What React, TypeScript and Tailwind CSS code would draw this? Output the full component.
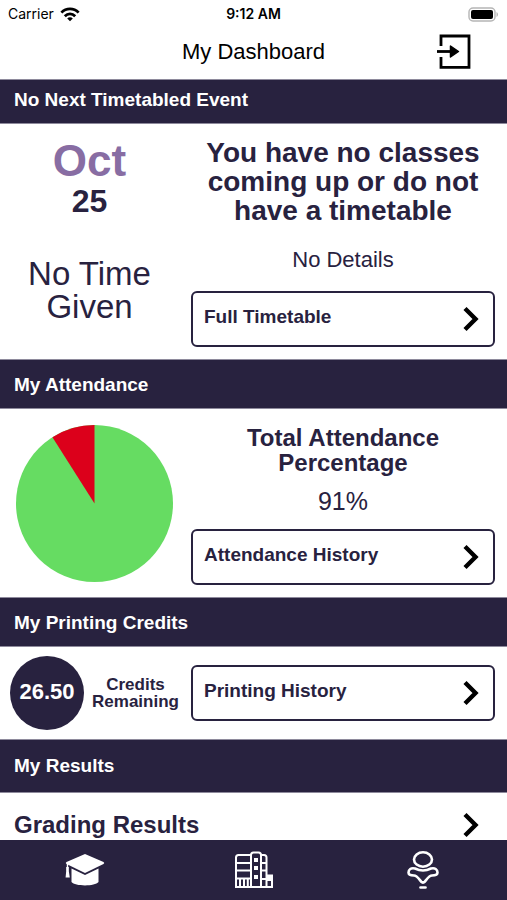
import type { ReactNode } from 'react'

interface SectionProps {
  title: string
  barClass: string
  children: ReactNode
}

function Section({ title, barClass, children }: SectionProps) {
  return (
    <section>
      <h2
        className={`flex items-center border-y border-[#8e8a9c] bg-[#28223f] px-3.5 text-[19px] leading-6 font-bold text-white ${barClass}`}
      >
        {title}
      </h2>
      {children}
    </section>
  )
}

function Chevron() {
  return (
    <svg viewBox="0 0 16 26" className="h-[26px] w-4 shrink-0" fill="none" stroke="#000" strokeWidth="4.4" aria-hidden="true">
      <path d="M2 2.5 L12.5 13 L2 23.5" />
    </svg>
  )
}

function LinkButton({ label }: { label: string }) {
  return (
    <button
      type="button"
      className="flex h-14 w-full items-center justify-between rounded-md border-2 border-[#28223f] bg-white pr-3.5 pl-[11px] text-left text-[19px] leading-6 font-bold"
    >
      <span className="pb-1">{label}</span>
      <Chevron />
    </button>
  )
}

function StatusBar() {
  return (
    <div className="grid h-7 grid-cols-3 items-center px-2 font-[Inter,sans-serif] text-sm text-black">
      <div className="flex items-center gap-1.5">
        <span>Carrier</span>
        <svg viewBox="0 0 20 15" className="h-[15px] w-5" fill="none" stroke="#000" strokeWidth="2.8" aria-hidden="true">
          <path d="M1.4 5.6 C6.2 .6 13.8 .6 18.6 5.6" />
          <path d="M4.8 9.2 C7.8 6.2 12.2 6.2 15.2 9.2" />
          <path d="M10 14.2 L7.2 11.4 C8.8 9.9 11.2 9.9 12.8 11.4 Z" fill="#000" stroke="none" />
        </svg>
      </div>
      <span className="text-center font-semibold">9:12 AM</span>
      <svg viewBox="0 0 31 15" className="h-[15px] w-[31px] justify-self-end" aria-hidden="true">
        <rect x="1" y="1" width="26" height="13" rx="4" fill="#fff" stroke="#b5b5b5" strokeWidth="1.4" />
        <rect x="3" y="3" width="22" height="9" rx="2" fill="#000" />
        <path d="M28.5 5 C30.5 6 30.5 9 28.5 10 Z" fill="#b5b5b5" />
      </svg>
    </div>
  )
}

function TitleBar() {
  return (
    <header className="grid h-[51px] grid-cols-[1fr_auto_1fr] items-center pr-9 pb-[3px]">
      <h1 className="col-start-2 pl-9 text-[22px] leading-7 text-black">My Dashboard</h1>
      <button type="button" aria-label="Log out" className="justify-self-end">
        <svg viewBox="0 0 34 36" className="h-9 w-[34px]" fill="none" stroke="#000" strokeWidth="2.8" aria-hidden="true">
          <path d="M4 12 V2 H32 V33.4 H4 V23" />
          <path d="M0 17.5 H16" />
          <path d="M13.5 12 L21.5 17.5 L13.5 23 Z" fill="#000" strokeWidth="1.5" strokeLinejoin="round" />
        </svg>
      </button>
    </header>
  )
}

// Red slice is the missed share, drawn back from twelve o'clock
function AttendancePie({ percent }: { percent: number }) {
  const angle = ((100 - percent) / 100) * 2 * Math.PI
  const x = 50 - 50 * Math.sin(angle)
  const y = 50 - 50 * Math.cos(angle)

  return (
    <svg viewBox="0 0 100 100" className="size-[157px]" role="img" aria-label={`${percent}% attended`}>
      <circle cx="50" cy="50" r="50" fill="#66dc62" />
      <path d={`M50 50 L50 0 A50 50 0 0 0 ${x} ${y} Z`} fill="#dc001b" />
    </svg>
  )
}

function GraduationIcon() {
  return (
    <svg viewBox="0 0 40 34" className="h-[34px] w-10" fill="#fff" aria-hidden="true">
      <path d="M20 1 L38.5 9 Q40 10 38.5 11 L20 20 L1.5 11 Q0 10 1.5 9 Z" />
      <path d="M6.5 15.5 L20 22 L33.5 15.5 V29 C30 33.5 10 33.5 6.5 29 Z" />
      <path d="M2.5 10.5 V18" stroke="#fff" strokeWidth="1.4" />
      <path d="M1.2 14 H3.8 V18 L4.8 24.5 H.6 L1.2 18 Z" />
    </svg>
  )
}

function CampusIcon() {
  return (
    <svg viewBox="0 0 40 38" className="h-[38px] w-10" fill="none" stroke="#fff" strokeWidth="2" aria-hidden="true">
      <path d="M17 4 H4.5 Q2 4 2 6.5 V36 H38 V24.5 H33" />
      <path d="M17 36 V4 Q17 1.5 19.5 1.5 H24.5 Q27 1.5 27 4 V36" />
      <path d="M27 4 H30 Q32.5 4 32.5 6.5 V36" />
      <path d="M2 12 H17 M2 19.5 H17 M2 27.5 H17 M27 12 H32 M27 19.5 H32 M27 28 H38" />
      <path d="M6 28 V36 M10 28 V36 M13.8 28 V36" />
      <path d="M20 7 H24 V11 H20 Z M20 15 H24 V19 H20 Z M20 24 H24 V28 H20 Z" fill="#fff" stroke="none" />
      <path d="M33 24 H38 V30 H33 Z" fill="#fff" stroke="none" />
    </svg>
  )
}

function ProfileIcon() {
  return (
    <svg viewBox="0 0 32 40" className="h-10 w-8" fill="none" stroke="#fff" strokeWidth="2.6" strokeLinejoin="round" aria-hidden="true">
      <ellipse cx="16" cy="9.5" rx="9" ry="7.2" />
      <path d="M8 18.5 C4 17.5 1.5 19.5 1.5 22.5 C1.5 25 3.5 25.5 7 25.5 C10 25.5 12 29 14 31.5 Q16 33.5 18 31.5 C20 29 22 25.5 25 25.5 C28.5 25.5 30.5 25 30.5 22.5 C30.5 19.5 28 17.5 24 18.5 C19 21 13 21 8 18.5 Z" />
      <path d="M13.5 37.5 H18.5" strokeLinecap="round" />
    </svg>
  )
}

const tabs = [
  { label: 'Dashboard', icon: <GraduationIcon /> },
  { label: 'Campus', icon: <CampusIcon /> },
  { label: 'Profile', icon: <ProfileIcon /> },
]

export default function App() {
  return (
    <div className="flex h-screen flex-col bg-white font-['Liberation_Sans',Arial,sans-serif] text-[#28223f]">
      <StatusBar />
      <TitleBar />

      <main className="min-h-0 flex-1 overflow-y-auto [scrollbar-width:none]">
        <Section title="No Next Timetabled Event" barClass="h-[45px] pb-1">
          <div className="flex pt-3.5 pb-3">
            <div className="w-[179px] shrink-0 text-center">
              <p className="text-[44px] leading-[45px] font-bold text-[#886da3]">Oct</p>
              <p className="text-[32px] leading-9 font-bold">25</p>
              <p className="mt-[38px] px-5 text-[33px] leading-[33px]">No Time Given</p>
            </div>
            <div className="flex-1 px-3 text-center">
              <p className="text-[28px] leading-[29px] font-bold">You have no classes coming up or do not have a timetable</p>
              <p className="mt-[21px] mb-[17px] text-[22px] leading-7">No Details</p>
              <LinkButton label="Full Timetable" />
            </div>
          </div>
        </Section>

        <Section title="My Attendance" barClass="h-[50px] pt-0.5">
          <div className="flex pt-4 pb-3">
            <div className="flex w-[179px] shrink-0 items-start justify-center pl-2.5">
              <AttendancePie percent={91} />
            </div>
            <div className="flex-1 px-3 text-center">
              <p className="px-8 text-[24px] leading-[25px] font-bold">Total Attendance Percentage</p>
              <p className="mt-3 mb-3.5 text-[25px] leading-7">91%</p>
              <LinkButton label="Attendance History" />
            </div>
          </div>
        </Section>

        <Section title="My Printing Credits" barClass="h-[50px] pt-0.5">
          <div className="flex items-center py-[9px]">
            <div className="flex w-[179px] shrink-0 items-center gap-2 pl-2.5">
              <div className="flex size-[74px] shrink-0 items-center justify-center rounded-full bg-[#28223f] pb-1 text-[22px] font-bold text-white">
                26.50
              </div>
              <p className="flex-1 text-center text-[17px] leading-[17px] font-bold">Credits Remaining</p>
            </div>
            <div className="flex-1 px-3">
              <LinkButton label="Printing History" />
            </div>
          </div>
        </Section>

        <Section title="My Results" barClass="h-[54px]">
          <a href="#grading" className="flex h-16 items-center justify-between pr-7 pl-3.5 text-[24px] font-bold">
            Grading Results
            <Chevron />
          </a>
        </Section>
      </main>

      <nav className="grid h-[60px] shrink-0 grid-cols-3 bg-[#28223f]">
        {tabs.map((tab) => (
          <button key={tab.label} type="button" aria-label={tab.label} className="flex items-center justify-center">
            {tab.icon}
          </button>
        ))}
      </nav>
    </div>
  )
}
